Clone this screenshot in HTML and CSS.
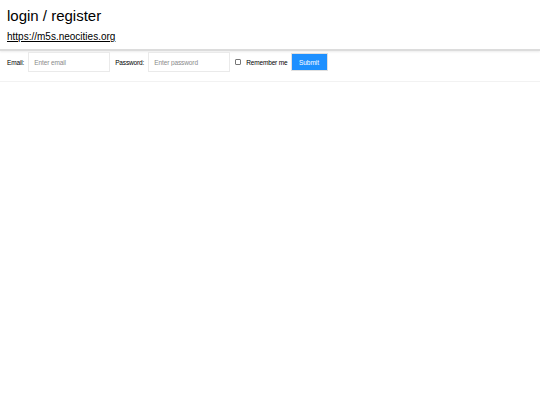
FILE: index.html
```
<!DOCTYPE html>
<html lang="en">
<head>
<meta charset="utf-8">
<title>login / register</title>
<link rel="stylesheet" href="styles.css">
</head>
<body>
<header class="top">
  <h1 class="title">login / register</h1>
  <a class="site-link" href="#">https://m5s.neocities.org</a>
</header>
<form class="form-inline">
  <label class="lbl" for="email">Email:</label>
  <input class="field" type="email" id="email" placeholder="Enter email">
  <label class="lbl" for="pwd">Password:</label>
  <input class="field" type="password" id="pwd" placeholder="Enter password">
  <label class="remember"><input class="check" type="checkbox"><span>Remember me</span></label>
  <button class="submit" type="button">Submit</button>
</form>
</body>
</html>
```
FILE: styles.css
```
html, body {
  margin: 0;
  padding: 0;
  background: #fff;
  font-family: "Liberation Sans", Arial, sans-serif;
  color: #000;
}
.top {
  padding: 7px 7px 6px;
  border-bottom: 2px solid #dcdcdc;
  box-shadow: 0 1px 2px rgba(0, 0, 0, 0.08);
  display: flex;
  flex-direction: column;
  align-items: flex-start;
}
.title {
  margin: 0;
  font-size: 15px;
  line-height: 17px;
  font-weight: normal;
}
.site-link {
  margin-top: 7px;
  font-size: 10px;
  line-height: 12px;
  color: #000;
  text-decoration: underline;
}
.form-inline {
  display: flex;
  align-items: center;
  padding: 1px 7px 9px;
  border-bottom: 1px solid #f2f2f2;
}
.lbl {
  font-size: 6.5px;
  letter-spacing: -0.15px;
  margin-right: 4px;
}
.field {
  box-sizing: border-box;
  width: 82px;
  height: 20px;
  margin: 0 5px 0 0;
  padding: 0 5px;
  border: 1px solid #eaeaea;
  background: #fff;
  font-family: "Liberation Sans", Arial, sans-serif;
  font-size: 6.5px;
  letter-spacing: -0.1px;
  outline: none;
}
.field::placeholder {
  color: #8a8a8a;
}
.remember {
  display: flex;
  align-items: center;
  font-size: 6.5px;
  letter-spacing: -0.15px;
  margin-right: 3px;
}
.check {
  appearance: none;
  -webkit-appearance: none;
  box-sizing: border-box;
  width: 6px;
  height: 6px;
  margin: 0 5px 0 0;
  border: 1px solid #777;
  border-radius: 1px;
  background: #fff;
}
.submit {
  box-sizing: border-box;
  width: 37px;
  height: 18px;
  padding: 0;
  border: 1px solid #e0e0e0;
  background: #1e90ff;
  color: #fff;
  font-family: "Liberation Sans", Arial, sans-serif;
  font-size: 6.5px;
}
```
